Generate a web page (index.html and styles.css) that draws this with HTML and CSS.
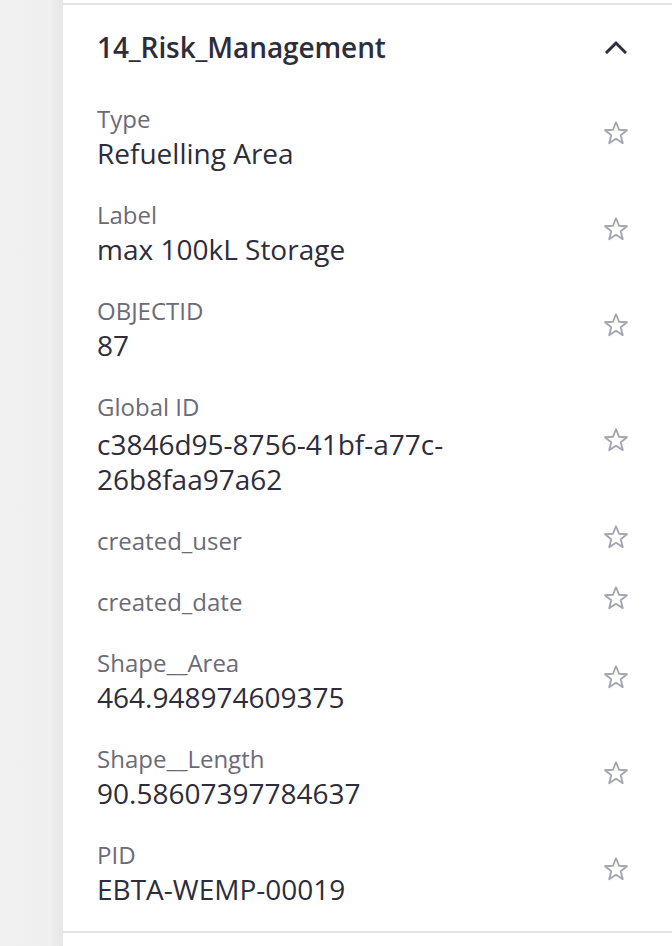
FILE: index.html
```html
<!DOCTYPE html>
<html lang="en">
<head>
<meta charset="utf-8">
<title>14_Risk_Management</title>
<link rel="stylesheet" href="styles.css">
</head>
<body>
<div class="layout">
  <div class="gutter"></div>
  <section class="panel">
    <div class="divider"></div>
    <header class="header">
      <h2 class="title">14_Risk_Management</h2>
      <button class="collapse" aria-label="Collapse">
        <svg width="22" height="14" viewBox="0 0 22 14"><path d="M2 12 L11 3 L20 12" fill="none" stroke="#2d2d3b" stroke-width="3" stroke-linecap="square"/></svg>
      </button>
    </header>
    <ul class="fields">
      <li class="field"><div class="text"><div class="label">Type</div><div class="value">Refuelling Area</div></div><span class="star"><svg width="28" height="28" viewBox="0 0 24 24"><path d="M12 2.8 L14.6 9.2 L21.4 9.6 L16.1 14 L17.8 20.7 L12 17 L6.2 20.7 L7.9 14 L2.6 9.6 L9.4 9.2 Z"/></svg></span></li>
      <li class="field"><div class="text"><div class="label">Label</div><div class="value">max 100kL Storage</div></div><span class="star"><svg width="28" height="28" viewBox="0 0 24 24"><path d="M12 2.8 L14.6 9.2 L21.4 9.6 L16.1 14 L17.8 20.7 L12 17 L6.2 20.7 L7.9 14 L2.6 9.6 L9.4 9.2 Z"/></svg></span></li>
      <li class="field"><div class="text"><div class="label">OBJECTID</div><div class="value">87</div></div><span class="star"><svg width="28" height="28" viewBox="0 0 24 24"><path d="M12 2.8 L14.6 9.2 L21.4 9.6 L16.1 14 L17.8 20.7 L12 17 L6.2 20.7 L7.9 14 L2.6 9.6 L9.4 9.2 Z"/></svg></span></li>
      <li class="field"><div class="text"><div class="label label--spaced">Global ID</div><div class="value">c3846d95-8756-41bf-a77c-<br>26b8faa97a62</div></div><span class="star"><svg width="28" height="28" viewBox="0 0 24 24"><path d="M12 2.8 L14.6 9.2 L21.4 9.6 L16.1 14 L17.8 20.7 L12 17 L6.2 20.7 L7.9 14 L2.6 9.6 L9.4 9.2 Z"/></svg></span></li>
      <li class="field"><div class="text"><div class="label">created_user</div></div><span class="star"><svg width="28" height="28" viewBox="0 0 24 24"><path d="M12 2.8 L14.6 9.2 L21.4 9.6 L16.1 14 L17.8 20.7 L12 17 L6.2 20.7 L7.9 14 L2.6 9.6 L9.4 9.2 Z"/></svg></span></li>
      <li class="field"><div class="text"><div class="label">created_date</div></div><span class="star"><svg width="28" height="28" viewBox="0 0 24 24"><path d="M12 2.8 L14.6 9.2 L21.4 9.6 L16.1 14 L17.8 20.7 L12 17 L6.2 20.7 L7.9 14 L2.6 9.6 L9.4 9.2 Z"/></svg></span></li>
      <li class="field"><div class="text"><div class="label">Shape__Area</div><div class="value">464.948974609375</div></div><span class="star"><svg width="28" height="28" viewBox="0 0 24 24"><path d="M12 2.8 L14.6 9.2 L21.4 9.6 L16.1 14 L17.8 20.7 L12 17 L6.2 20.7 L7.9 14 L2.6 9.6 L9.4 9.2 Z"/></svg></span></li>
      <li class="field"><div class="text"><div class="label">Shape__Length</div><div class="value">90.58607397784637</div></div><span class="star"><svg width="28" height="28" viewBox="0 0 24 24"><path d="M12 2.8 L14.6 9.2 L21.4 9.6 L16.1 14 L17.8 20.7 L12 17 L6.2 20.7 L7.9 14 L2.6 9.6 L9.4 9.2 Z"/></svg></span></li>
      <li class="field"><div class="text"><div class="label">PID</div><div class="value">EBTA-WEMP-00019</div></div><span class="star"><svg width="28" height="28" viewBox="0 0 24 24"><path d="M12 2.8 L14.6 9.2 L21.4 9.6 L16.1 14 L17.8 20.7 L12 17 L6.2 20.7 L7.9 14 L2.6 9.6 L9.4 9.2 Z"/></svg></span></li>
    </ul>
    <div class="divider bottom"></div>
  </section>
</div>
</body>
</html>
```
FILE: styles.css
```css
html, body {
  margin: 0;
  padding: 0;
  height: 100%;
}
body {
  background: #f0f0f0;
  font-family: "Open Sans", "Noto Sans", sans-serif;
  color: #2d2d3b;
}
.layout {
  display: flex;
  min-height: 100%;
}
.gutter {
  width: 63px;
  flex: none;
  background: linear-gradient(to right, #f1f1f1 0, #efefef 80%, #e6e6e6 100%);
}
.panel {
  flex: 1;
  background: #fff;
  padding-top: 3px;
}
.divider {
  height: 2px;
  background: #e2e2e8;
}
.header {
  display: flex;
  align-items: center;
  justify-content: space-between;
  height: 83px;
  padding: 0 45px 0 34px;
}
.title {
  margin: 0;
  font-size: 28px;
  font-weight: 600;
  color: #2d2d3b;
  letter-spacing: -0.1px;
}
.collapse {
  background: none;
  border: 0;
  padding: 0;
  display: flex;
}
.fields {
  list-style: none;
  margin: 0;
  padding: 0;
}
.field {
  display: flex;
  align-items: center;
  justify-content: space-between;
  padding: 6px 42px 13px 34px;
}
.text {
  padding-top: 7px;
}
.label {
  font-size: 24px;
  line-height: 35px;
  color: #6b6b78;
}
.label--spaced {
  margin-bottom: 3px;
}
.value {
  font-size: 28px;
  line-height: 35px;
  color: #2d2d3b;
}
.star {
  display: flex;
  align-items: center;
  height: 37px;
}
.star path {
  fill: none;
  stroke: #a5a5af;
  stroke-width: 1.6;
  stroke-linejoin: round;
}
.bottom {
  margin-top: 11px;
}
```
